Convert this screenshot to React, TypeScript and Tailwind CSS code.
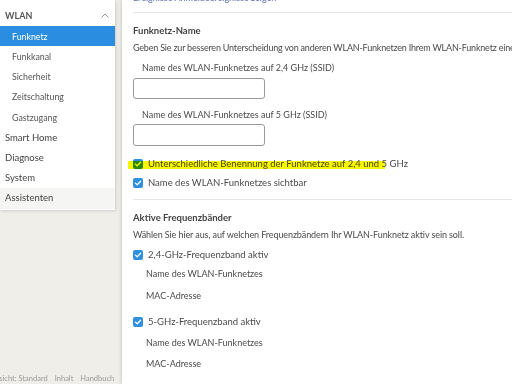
import React from "react";

const font = { fontFamily: "Lato, 'Open Sans', sans-serif" };

function Check() {
  return (
    <span className="flex h-[10px] w-[10px] shrink-0 items-center justify-center rounded-[2px] bg-[#2f8fe0]">
      <svg width="8" height="8" viewBox="0 0 8 8" fill="none">
        <path d="M1.4 4.1 L3.2 5.8 L6.6 2.2" stroke="white" strokeWidth="1.3" strokeLinecap="round" strokeLinejoin="round" />
      </svg>
    </span>
  );
}

export default function App() {
  const side = [
    "Funknetz",
    "Funkkanal",
    "Sicherheit",
    "Zeitschaltung",
    "Gastzugang",
  ];
  return (
    <div className="flex h-[384px] w-[512px] overflow-hidden bg-[#efeee9] text-[9.5px] text-[#4a4a4a]" style={font}>
      {/* left column */}
      <div className="flex w-[122px] shrink-0 flex-col">
        <div className="w-[115px] bg-white pt-[5px] shadow-[1px_1px_3px_rgba(0,0,0,0.15)]">
          <div className="flex h-[21px] items-center justify-between pl-[5px] pr-[6px] text-[9px] font-bold text-[#555]">
            <span>WLAN</span>
            <svg width="8" height="5" viewBox="0 0 8 5" fill="none">
              <path d="M0.5 4.5 L4 1 L7.5 4.5" stroke="#888" strokeWidth="0.9" />
            </svg>
          </div>
          {side.map((s, i) => (
            <div
              key={s}
              className={
                i === 0
                  ? "flex h-[20.3px] items-center bg-[#2b8de0] pl-[12px] text-[8.8px] text-white"
                  : "flex h-[20.3px] items-center pl-[12px] text-[8.8px] text-[#555]"
              }
            >
              {s}
            </div>
          ))}
          {["Smart Home", "Diagnose", "System"].map((s) => (
            <div key={s} className="flex h-[20.3px] items-center pl-[5px] text-[#444]">
              {s}
            </div>
          ))}
          <div className="flex h-[20.3px] items-center bg-[#f5f5f3] pl-[5px] text-[#444]">Assistenten</div>
          <div className="h-[1px]" />
        </div>
        <div className="flex-1" />
        <div className="-ml-[10px] flex h-[10px] items-center gap-[7px] whitespace-nowrap text-[7.5px] text-[#9a9a9a]">
          <span>Ansicht: Standard</span>
          <span>Inhalt</span>
          <span>Handbuch</span>
        </div>
      </div>

      {/* content */}
      <div className="flex-1 overflow-hidden whitespace-nowrap bg-white pl-[11px] shadow-[-1px_0_3px_rgba(0,0,0,0.15)]">
        <div className="-mt-[7px] flex h-[10px] items-center text-[9px] text-[#5a6db0]">Ereignisse Anmeldeereignisse zeigen</div>
        <div className="mt-[9px] h-[1px] bg-[#e6e6e6]" />
        <div className="flex h-[25px] items-end font-bold text-[#444]">Funknetz-Name</div>
        <div className="mt-[3px] flex h-[14px] items-center text-[9px] tracking-[-0.2px]">
          Geben Sie zur besseren Unterscheidung von anderen WLAN-Funknetzen Ihrem WLAN-Funknetz einen Namen.
        </div>
        <div className="mt-[6px] flex h-[14px] items-center pl-[9px] text-[9px]">Name des WLAN-Funknetzes auf 2,4 GHz (SSID)</div>
        <div className="mt-[3px] h-[21px] w-[132px] rounded-[3px] border border-[#9a9a9a]" />
        <div className="mt-[9px] flex h-[14px] items-center pl-[9px] text-[9px]">Name des WLAN-Funknetzes auf 5 GHz (SSID)</div>
        <div className="mt-[2px] h-[22px] w-[132px] rounded-[3px] border border-[#9a9a9a]" />
        <div className="relative mt-[11px] flex h-[14px] items-center gap-[5px]">
          <Check />
          <span>Unterschiedliche Benennung der Funknetze auf 2,4 und 5 GHz</span>
          <span className="absolute left-[-5px] top-[4px] h-[8px] w-[257px] bg-[#f7f500] mix-blend-multiply" />
        </div>
        <div className="mt-[5px] flex h-[14px] items-center gap-[5px]">
          <Check />
          <span>Name des WLAN-Funknetzes sichtbar</span>
        </div>
        <div className="mt-[9px] h-[1px] bg-[#e6e6e6]" />
        <div className="mt-[11px] flex h-[14px] items-center font-bold text-[#444]">Aktive Frequenzbänder</div>
        <div className="mt-[3px] flex h-[14px] items-center text-[9px] tracking-[-0.1px]">
          Wählen Sie hier aus, auf welchen Frequenzbändern Ihr WLAN-Funknetz aktiv sein soll.
        </div>
        <div className="mt-[6px] flex h-[14px] items-center gap-[5px]">
          <Check />
          <span>2,4-GHz-Frequenzband aktiv</span>
        </div>
        <div className="mt-[5px] flex h-[14px] items-center pl-[13px] text-[9px]">Name des WLAN-Funknetzes</div>
        <div className="mt-[8px] flex h-[14px] items-center pl-[13px] text-[9px]">MAC-Adresse</div>
        <div className="mt-[12px] flex h-[14px] items-center gap-[5px]">
          <Check />
          <span>5-GHz-Frequenzband aktiv</span>
        </div>
        <div className="mt-[7px] flex h-[14px] items-center pl-[13px] text-[9px]">Name des WLAN-Funknetzes</div>
        <div className="mt-[7px] flex h-[14px] items-center pl-[13px] text-[9px]">MAC-Adresse</div>
      </div>
    </div>
  );
}
